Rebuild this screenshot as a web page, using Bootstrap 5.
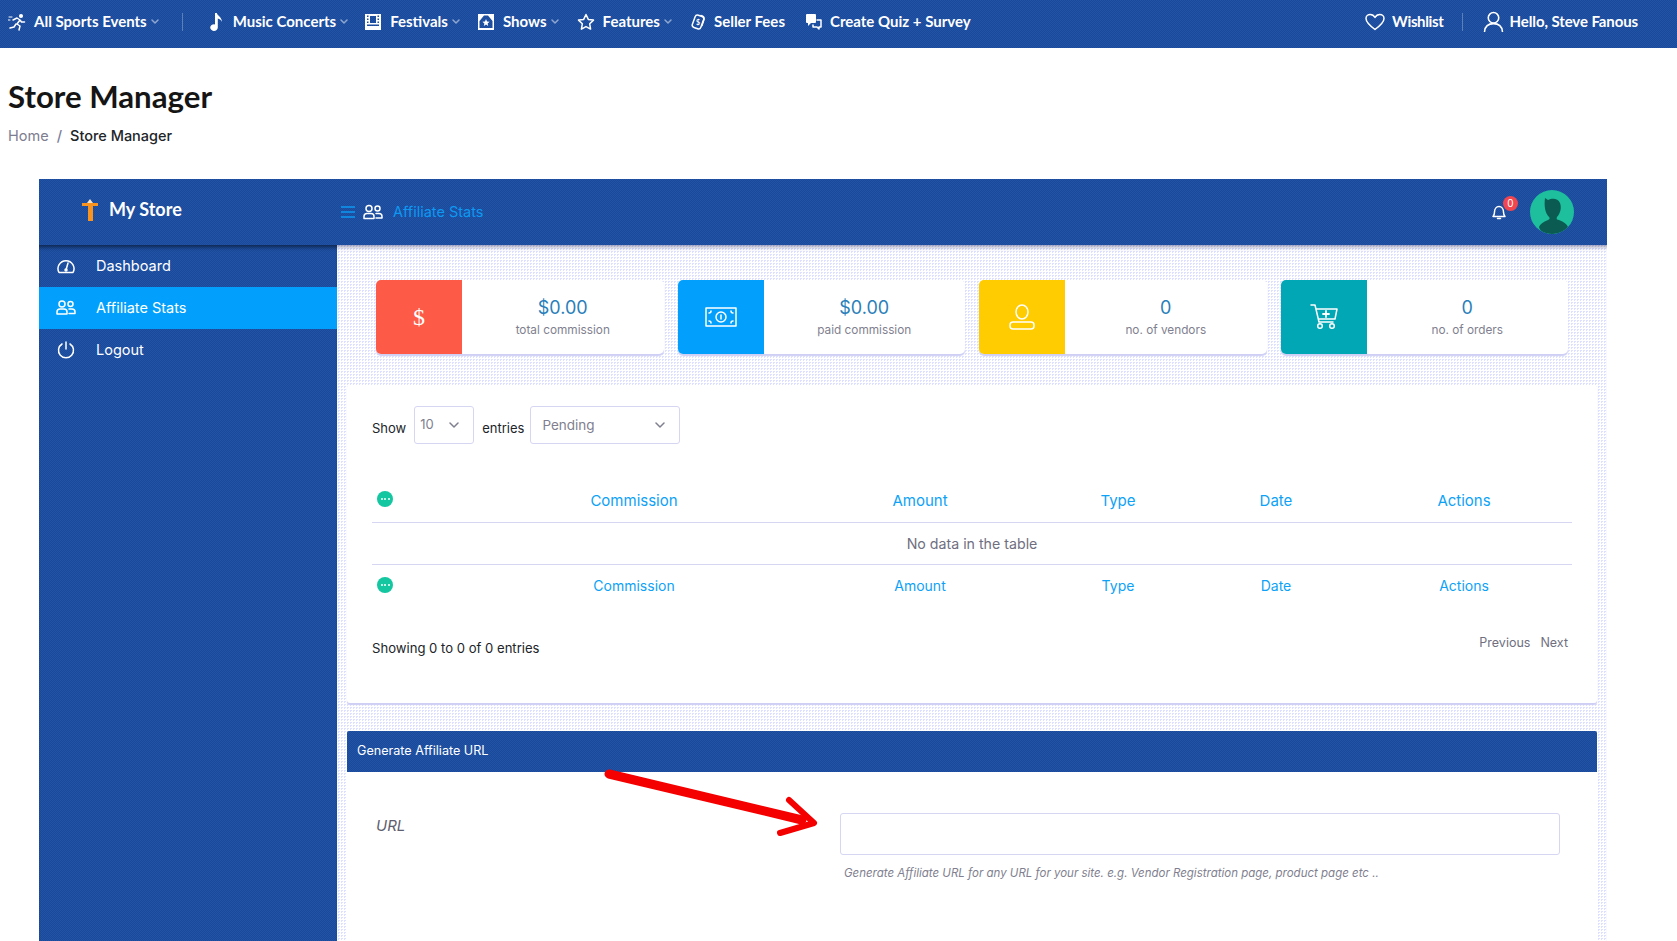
<!DOCTYPE html>
<html lang="en">
<head>
<meta charset="UTF-8">
<meta name="viewport" content="width=device-width, initial-scale=1.0">
<title>Store Manager</title>
<link href="https://cdn.jsdelivr.net/npm/bootstrap@5.3.2/dist/css/bootstrap.min.css" rel="stylesheet">
<style>
:root { --blue-dither: repeating-conic-gradient(#1a4997 0 25%, #2153a8 0 50%) 0 0 / 2px 2px; }
html, body { height: 100%; }
body { font-family: Inter, "Liberation Sans", sans-serif; overflow: hidden; color: #212529; }
svg { display: block; flex-shrink: 0; }
.ico { fill: none; stroke: currentColor; stroke-width: 1.5; stroke-linecap: round; stroke-linejoin: round; }

.top-bar { height: 48px; background: var(--blue-dither); padding: 0 0 5px 8px; font-family: Lato, "Liberation Sans", sans-serif; font-weight: 700; font-size: 15px; color: #fff; }
.top-link { display: flex; align-items: center; color: #fff; text-decoration: none; white-space: nowrap; }
.caret-sm { width: 8px; height: 5px; margin-left: 4px; color: #8ea6d0; }
.top-sep { width: 1px; height: 18px; background: #5d7fb9; }
.tight-txt { letter-spacing: -.35px; }
.hello-txt { letter-spacing: -.1px; }

.page-title { font-family: Lato, "Liberation Sans", sans-serif; font-weight: 700; font-size: 31.2px; line-height: 36px; color: #151515; margin: -1px 0 0; }
.crumbs { font-size: 14.5px; margin: 11px 0 0; --bs-breadcrumb-divider-color: #7c7c9a; }
.crumbs .breadcrumb-item { color: #111; font-weight: 500; }
.crumbs a { color: #7d7d90; font-weight: 400; text-decoration: none; }
.head-block { padding: 31px 0 0 8px; height: 131px; }

.panel-wrap { padding: 0 70px 0 39px; flex: 1 1 auto; min-height: 0; }
.panel-head { height: 66px; background: var(--blue-dither); color: #fff; }
.brand-box { width: 298px; padding: 0 0 6px 42px; font-family: Lato, "Liberation Sans", sans-serif; font-weight: 700; font-size: 18px; }
.brand-name { margin-left: 6px; }
.crumb-title { color: #0d99f2; font-size: 14.5px; }
.bell-badge { position: absolute; top: -7px; left: 12px; width: 15px; height: 15px; border-radius: 50%; background: #f14650; color: #fff; font-size: 10px; line-height: 15px; text-align: center; }
.avatar-box { width: 44px; height: 44px; border-radius: 50%; background: #1dbf9d; overflow: hidden; margin: 0 33px 0 23px; }

.side-col { width: 298px; background: var(--blue-dither); box-shadow: inset 0 5px 4px -3px rgba(0,0,0,.55); flex-shrink: 0; }
.side-item { display: flex; align-items: center; height: 42px; padding-left: 17px; color: #fff; text-decoration: none; font-size: 14.5px; }
.side-item svg { width: 20px; height: 20px; margin-right: 20px; }
.side-item.is-on { background: #02a0fc; color: #fff; }

.main-col { flex: 1 1 auto; min-width: 0; background: #fff repeating-conic-gradient(#dde1ff 0 25%, #fff 0 100%) 0 0 / 3px 3px; box-shadow: inset 0 5px 4px -3px rgba(40,40,90,.45); padding: 0 10px; }
.stat-row { padding: 35px 29px 31px; gap: 14px; }
.stat-box { flex: 1 1 0; height: 74px; background: #fff; border-radius: 5px; box-shadow: 0 2px 1px #cfcff6; overflow: hidden; }
.stat-ico { width: 86px; color: #fff; }
.stat-num { color: #2a7fba; font-size: 18px; line-height: 22px; }
.stat-lbl { color: #7f7f8f; font-size: 11.8px; line-height: 16px; margin-top: 3px; }
.bg-red { background: #fd5a48; }
.bg-sky { background: #02a0fc; }
.bg-amber { background: #fecc00; }
.bg-teal { background: #02a7b5; }

.list-box { background: #fff; height: 318px; padding: 21px 25px 0; box-shadow: 0 2px 1px #cfcff6; border-radius: 3px; }
.filter-row { height: 38px; font-size: 13px; }
.filter-word { padding-top: 7px; }
.pick-box { height: 38px; border: 1px solid #d6d6f2; border-radius: 3px; color: #7f7f8f; padding: 0 14px 0 5px; font-size: 13px; }
.pick-num { width: 60px; margin: 0 8px; }
.pick-state { width: 150px; margin-left: 6px; padding-left: 11px; font-size: 13.5px; }
.data-tbl { margin: 34px 0 0; table-layout: fixed; width: 100%; --bs-table-border-color: #d6d6f2; }
.data-tbl th, .data-tbl td { text-align: center; padding: 0; vertical-align: middle; font-weight: 400; }
.data-tbl thead th { height: 44px; padding-top: 3px; color: #0da2f7; font-size: 15px; border-bottom: 1px solid #d6d6f2; }
.data-tbl tbody td { height: 42px; padding-top: 2px; color: #6f6f7f; font-size: 14.2px; border-bottom: 1px solid #d6d6f2; }
.data-tbl tfoot th { height: 44px; color: #0da2f7; font-size: 14px; border: 0; padding-bottom: 2px; }
.data-tbl tfoot .dot-mark { margin-top: -1px; }
.dot-mark { width: 16px; height: 16px; border-radius: 50%; background: #14c7a0; color: #fff; gap: 1.5px; margin: -4px 0 0 5px; }
.dot-mark i { width: 2px; height: 2px; background: #fff; border-radius: 50%; }
.foot-row { font-size: 13.1px; margin-top: 31px; }
.pager { color: #6f6f7f; font-size: 12.5px; gap: 10px; padding-right: 4px; margin-top: -10px; }

.form-head { margin-top: 28px; height: 41px; padding-left: 10px; background: var(--blue-dither); color: #fff; font-size: 12.6px; border-radius: 2px 2px 0 0; }
.form-body { background: #fff; height: 169px; padding: 41px 37px 0 29px; position: relative; }
.url-lbl { width: 464px; font-style: italic; color: #5e5e6e; font-size: 15px; padding-top: 2px; }
.url-input { width: 720px; height: 42px; border: 1px solid #d6d6f2; border-radius: 3px; box-shadow: none; }
.url-help { font-size: 11.5px; font-style: italic; color: #7f7f8f; margin-top: 10px; padding-left: 4px; }
.red-arrow { position: absolute; left: 250px; top: -10px; }
</style>
</head>
<body class="d-flex flex-column">

<nav class="top-bar d-flex align-items-center flex-shrink-0">
    <a class="top-link" href="#">
        <svg width="18" height="18" viewBox="0 0 18 18" class="me-2"><g class="ico" stroke-width="2.200"><circle cx="13" cy="3" r="1.300" fill="#fff"/><path d="M5 7l4-2 3 2-3 4 3 2-1 4M8 11l-2 3-4 1M12 7l1.500 2 3 0"/><path d="M1 4h3M0 7h2" stroke-width="1"/></g></svg>
        All Sports Events
        <svg class="caret-sm" viewBox="0 0 8 5"><path class="ico" d="M1 1l3 3 3-3" stroke-width="1"/></svg>
    </a>
    <span class="top-sep" style="margin:0 26px 0 23px"></span>
    <a class="top-link" href="#">
        <svg width="16" height="20" viewBox="0 0 16 20" class="me-2"><path fill="#fff" d="M6 1h1.800c.6 3 5.500 4 5 9-.6-2.400-2.400-3.200-4-3.600V15.500a3.800 3.300 0 1 1-2.800-3.100z"/></svg>
        Music Concerts
        <svg class="caret-sm" viewBox="0 0 8 5"><path class="ico" d="M1 1l3 3 3-3" stroke-width="1"/></svg>
    </a>
    <a class="top-link" href="#" style="margin-left:16px">
        <svg width="18" height="18" viewBox="0 0 18 18" class="me-2"><path fill="#fff" d="M1 1h16v16H1zM3 2.500v1.500h1.500V2.500zM3 5.500V7h1.500V5.500zM3 8.500V10h1.500V8.500zM13.500 2.500v1.500H15V2.500zM13.500 5.500V7H15V5.500zM13.500 8.500V10H15V8.500zM6 3v7h6V3zM3 13h12v-1.500H3z" fill-rule="evenodd"/></svg>
        Festivals
        <svg class="caret-sm" viewBox="0 0 8 5"><path class="ico" d="M1 1l3 3 3-3" stroke-width="1"/></svg>
    </a>
    <a class="top-link" href="#" style="margin-left:17px">
        <svg width="18" height="18" viewBox="0 0 18 18" class="me-2"><path fill="#fff" fill-rule="evenodd" d="M1 1h16v16H1zM2.500 2.500V15h13V2.500zM9 6l1 2.500 2.600.2-2 1.700.6 2.600L9 11.600 6.800 13l.6-2.600-2-1.700 2.600-.2zM2.500 2.500H7L2.500 8zM15.500 2.500H11l4.500 5.500z"/></svg>
        Shows
        <svg class="caret-sm" viewBox="0 0 8 5"><path class="ico" d="M1 1l3 3 3-3" stroke-width="1"/></svg>
    </a>
    <a class="top-link" href="#" style="margin-left:18px">
        <svg width="18" height="18" viewBox="0 0 18 18" class="me-2"><path class="ico" d="M9 1.500l2.300 4.900 5.200.7-3.800 3.700.9 5.300L9 13.600l-4.600 2.500.9-5.300L1.500 7.100l5.200-.7z"/></svg>
        Features
        <svg class="caret-sm" viewBox="0 0 8 5"><path class="ico" d="M1 1l3 3 3-3" stroke-width="1"/></svg>
    </a>
    <a class="top-link" href="#" style="margin-left:18px">
        <svg width="16" height="16" viewBox="0 0 16 16" class="me-2"><g class="ico" stroke-width="1"><rect x="3.500" y="1.500" width="9" height="13" rx="2.500" transform="rotate(20 8 8)"/><path d="M11 1.500c2 .5 3.500 1.500 3 4l-2 6"/></g><text x="6" y="11" font-size="7" fill="#fff">$</text></svg>
        Seller Fees
    </a>
    <a class="top-link" href="#" style="margin-left:21px">
        <svg width="16" height="16" viewBox="0 0 16 16" class="me-2"><rect x="0" y="0" width="10" height="9" rx="1" fill="#fff"/><path d="M2 9v3l3-3z" fill="#fff"/><g class="ico" stroke-width="1"><path d="M11 6h4v7h-2v2l-2-2H7v-2"/></g></svg>
        Create Quiz + Survey
    </a>
    <a class="top-link tight-txt ms-auto" href="#">
        <svg width="20" height="18" viewBox="0 0 20 18" style="margin-right:7px"><path class="ico" d="M10 16.500C4 12 1 9 1 5.500 1 3 3 1.500 5.200 1.500c2 0 3.700 1 4.800 3 1.100-2 2.800-3 4.800-3C17 1.500 19 3 19 5.500c0 3.500-3 6.500-9 11z"/></svg>
        Wishlist
    </a>
    <span class="top-sep" style="margin:0 20px 0 18px"></span>
    <a class="top-link hello-txt" href="#" style="margin-right:39px">
        <svg width="21" height="21" viewBox="0 0 20 20" style="margin-right:6px"><g class="ico"><circle cx="10" cy="6.500" r="5"/><path d="M1.500 19.500c.5-5 4-7.500 8.500-7.500s8 2.500 8.500 7.500"/></g></svg>
        Hello, Steve Fanous
    </a>
</nav>

<div class="head-block flex-shrink-0">
    <h1 class="page-title">Store Manager</h1>
    <ol class="breadcrumb crumbs">
        <li class="breadcrumb-item"><a href="#">Home</a></li>
        <li class="breadcrumb-item active text-dark">Store Manager</li>
    </ol>
</div>

<div class="panel-wrap d-flex flex-column">
    <header class="panel-head d-flex align-items-center flex-shrink-0">
        <div class="brand-box d-flex align-items-center">
            <svg width="18" height="24" viewBox="0 0 18 24" class="me-1"><path fill="#f7931e" d="M1 6h16v3h-5v15H7V9H1z"/><path fill="#f4e3c8" d="M6 6l3-4 3 4z"/></svg>
            <span class="brand-name">My Store</span>
        </div>
        <div class="d-flex align-items-center" style="margin-top:0; margin-left:4px">
            <svg width="14" height="12" viewBox="0 0 14 12" class="me-1"><path d="M0 1h14M0 6h14M0 11h14" stroke="#0d99f2" stroke-width="1.300"/></svg>
            <svg width="20" height="16" viewBox="0 0 20 16" class="ms-1"><g class="ico" stroke-width="1.200"><circle cx="6" cy="4.500" r="3"/><circle cx="14.500" cy="4.500" r="2.500"/><path d="M1 14.500v-2c0-2 1-3 3-3h4c2 0 3 1 3 3v2zM13 9.500h3c2 0 3 1 3 3v1.500h-6"/></g></svg>
            <span class="crumb-title" style="margin-left:10px">Affiliate Stats</span>
        </div>
        <div class="ms-auto d-flex align-items-center">
            <div class="position-relative">
                <svg width="16" height="18" viewBox="0 0 16 18"><path class="ico" stroke-width="1.200" d="M2 13.500c1-1 1.500-2 1.500-4.500 0-3 1.800-5.500 4.500-5.500s4.500 2.500 4.500 5.500c0 2.500.5 3.500 1.500 4.500zM6.500 15.500h3"/></svg>
                <span class="bell-badge">0</span>
            </div>
            <div class="avatar-box">
                <svg width="44" height="44" viewBox="0 0 44 44"><path fill="#0c5b52" d="M15 8l3 2c4-2 10-2 12 3 2 5 0 11-3 14-1 2 0 3 2 3 5 2 8 4 9 7-4 5-10 7-16 7S10 42 9 37c1-3 4-5 9-7 2-1 2-2 1-3-4-4-5-11-4-19z"/></svg>
            </div>
        </div>
    </header>

    <div class="d-flex flex-grow-1" style="min-height:0">
        <aside class="side-col">
            <a class="side-item" href="#">
                <svg viewBox="0 0 20 20"><g class="ico" stroke-width="1.200"><path d="M3 16.500a8 8 0 1 1 14 0z"/><path d="M10 14l2-7"/><circle cx="10" cy="14" r="1"/></g></svg>
                Dashboard
            </a>
            <a class="side-item is-on" href="#">
                <svg viewBox="0 0 20 20"><g class="ico" stroke-width="1.200"><circle cx="6" cy="6" r="3"/><circle cx="14.500" cy="6" r="2.500"/><path d="M1 16v-2c0-2 1-3 3-3h4c2 0 3 1 3 3v2zM13 11h3c2 0 3 1 3 3v1.500h-6"/></g></svg>
                Affiliate Stats
            </a>
            <a class="side-item" href="#">
                <svg viewBox="0 0 20 20"><g class="ico" stroke-width="1.300"><path d="M6 4a7.500 7.500 0 1 0 8 0M10 2v7"/></g></svg>
                Logout
            </a>
        </aside>

        <main class="main-col">
            <div class="stat-row d-flex">
                <div class="stat-box d-flex">
                    <div class="stat-ico bg-red d-flex align-items-center justify-content-center" style="font-family:'Liberation Serif',serif;font-size:24px">$</div>
                    <div class="flex-grow-1 text-center d-flex flex-column justify-content-center">
                        <div class="stat-num">$0.00</div>
                        <div class="stat-lbl">total commission</div>
                    </div>
                </div>
                <div class="stat-box d-flex">
                    <div class="stat-ico bg-sky d-flex align-items-center justify-content-center">
                        <svg width="32" height="20" viewBox="0 0 32 20"><g class="ico" stroke-width="1.800"><rect x="1" y="1" width="30" height="18"/><circle cx="16" cy="10" r="5"/><path d="M4 6c1 0 2-1 2-2M28 6c-1 0-2-1-2-2M4 14c1 0 2 1 2 2M28 14c-1 0-2 1-2 2M16 8v4"/></g></svg>
                    </div>
                    <div class="flex-grow-1 text-center d-flex flex-column justify-content-center">
                        <div class="stat-num">$0.00</div>
                        <div class="stat-lbl">paid commission</div>
                    </div>
                </div>
                <div class="stat-box d-flex">
                    <div class="stat-ico bg-amber d-flex align-items-center justify-content-center">
                        <svg width="26" height="26" viewBox="0 0 26 26"><g class="ico"><ellipse cx="13" cy="8" rx="6" ry="7"/><rect x="1" y="18" width="24" height="7" rx="3"/></g></svg>
                    </div>
                    <div class="flex-grow-1 text-center d-flex flex-column justify-content-center">
                        <div class="stat-num">0</div>
                        <div class="stat-lbl">no. of vendors</div>
                    </div>
                </div>
                <div class="stat-box d-flex">
                    <div class="stat-ico bg-teal d-flex align-items-center justify-content-center">
                        <svg width="28" height="26" viewBox="0 0 28 26"><g class="ico"><path d="M1 1h4l4 17h14M6 5h21l-2 10H8.500"/><circle cx="10" cy="22" r="2.300"/><circle cx="22" cy="22" r="2.300"/><path d="M16 7v6M13 10h6" stroke-width="1.800"/></g></svg>
                    </div>
                    <div class="flex-grow-1 text-center d-flex flex-column justify-content-center">
                        <div class="stat-num">0</div>
                        <div class="stat-lbl">no. of orders</div>
                    </div>
                </div>
            </div>

            <section class="list-box">
                <div class="filter-row d-flex align-items-center">
                    <span class="filter-word">Show</span>
                    <div class="pick-box pick-num d-flex align-items-center justify-content-between">
                        <span>10</span>
                        <svg width="10" height="6" viewBox="0 0 10 6"><path class="ico" stroke-width="1" d="M1 1l4 4 4-4"/></svg>
                    </div>
                    <span class="filter-word">entries</span>
                    <div class="pick-box pick-state d-flex align-items-center justify-content-between">
                        <span>Pending</span>
                        <svg width="10" height="6" viewBox="0 0 10 6"><path class="ico" stroke-width="1" d="M1 1l4 4 4-4"/></svg>
                    </div>
                </div>

                <table class="table data-tbl">
                    <colgroup><col style="width:96px"><col style="width:332px"><col style="width:240px"><col style="width:156px"><col style="width:160px"><col style="width:216px"></colgroup>
                    <thead>
                        <tr>
                            <th><span class="dot-mark d-flex align-items-center justify-content-center"><i></i><i></i><i></i></span></th>
                            <th>Commission</th><th>Amount</th><th>Type</th><th>Date</th><th>Actions</th>
                        </tr>
                    </thead>
                    <tbody>
                        <tr><td colspan="6">No data in the table</td></tr>
                    </tbody>
                    <tfoot>
                        <tr>
                            <th><span class="dot-mark d-flex align-items-center justify-content-center"><i></i><i></i><i></i></span></th>
                            <th>Commission</th><th>Amount</th><th>Type</th><th>Date</th><th>Actions</th>
                        </tr>
                    </tfoot>
                </table>

                <div class="foot-row d-flex justify-content-between align-items-center">
                    <span>Showing 0 to 0 of 0 entries</span>
                    <span class="pager d-flex"><span>Previous</span><span>Next</span></span>
                </div>
            </section>

            <div class="form-head d-flex align-items-center">Generate Affiliate URL</div>
            <section class="form-body">
                <div class="d-flex">
                    <label class="url-lbl" for="aff-url">URL</label>
                    <div>
                        <input id="aff-url" class="form-control url-input" type="text">
                        <div class="url-help">Generate Affiliate URL for any URL for your site. e.g. Vendor Registration page, product page etc ..</div>
                    </div>
                </div>
                <svg class="red-arrow" width="230" height="80" viewBox="0 0 230 80"><path d="M12 12L205 58" fill="none" stroke="#f40000" stroke-width="9" stroke-linecap="round"/><path d="M192 38l25 23-34 10" fill="none" stroke="#f40000" stroke-width="6" stroke-linecap="round" stroke-linejoin="round"/></svg>
            </section>
        </main>
    </div>
</div>

<script src="https://cdn.jsdelivr.net/npm/bootstrap@5.3.2/dist/js/bootstrap.bundle.min.js"></script>
</body>
</html>
